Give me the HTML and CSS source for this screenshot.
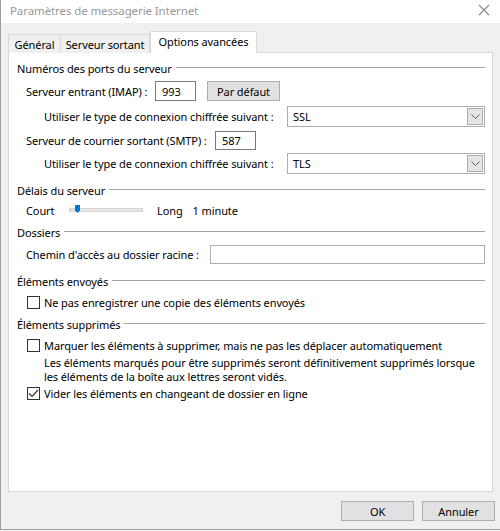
FILE: index.html
```html
<!DOCTYPE html>
<html lang="fr">
<head>
    <meta charset="UTF-8">
    <title>Paramètres de messagerie Internet</title>
    <link rel="stylesheet" href="styles.css">
</head>
<body>
    <div class="window">
        <!-- Title bar -->
        <div class="title-bar">
            <span class="title-text">Paramètres de messagerie Internet</span>
            <svg class="close-icon" width="12" height="12" viewBox="0 0 12 12">
                <path d="M1 1 L11 11 M11 1 L1 11" stroke="#8a8a8a" stroke-width="1.1" fill="none"/>
            </svg>
        </div>

        <!-- Tabs -->
        <div class="tab-strip">
            <div class="tab tab-general">Général</div>
            <div class="tab tab-out">Serveur sortant</div>
            <div class="tab tab-active">Options avancées</div>
        </div>

        <!-- Tab panel -->
        <div class="tab-panel">
            <div class="group-heading"><span>Numéros des ports du serveur</span></div>

            <div class="row row-imap">
                <label class="lbl lbl-imap">Serveur entrant (IMAP) :</label>
                <div class="text-box port-box">993</div>
                <div class="btn btn-default">Par défaut</div>
            </div>
            <div class="row row-ssl">
                <label class="lbl lbl-enc">Utiliser le type de connexion chiffrée suivant :</label>
                <div class="combo"><span class="combo-value">SSL</span><span class="combo-arrow"><svg width="9" height="5" viewBox="0 0 9 5"><path d="M0.5 0.5 L4.5 4.5 L8.5 0.5" stroke="#606060" fill="none"/></svg></span></div>
            </div>
            <div class="row row-smtp">
                <label class="lbl lbl-smtp">Serveur de courrier sortant (SMTP) :</label>
                <div class="text-box port-box">587</div>
            </div>
            <div class="row row-tls">
                <label class="lbl lbl-enc">Utiliser le type de connexion chiffrée suivant :</label>
                <div class="combo"><span class="combo-value">TLS</span><span class="combo-arrow"><svg width="9" height="5" viewBox="0 0 9 5"><path d="M0.5 0.5 L4.5 4.5 L8.5 0.5" stroke="#606060" fill="none"/></svg></span></div>
            </div>

            <div class="group-heading heading-delay"><span>Délais du serveur</span></div>
            <div class="row row-slider">
                <span class="lbl lbl-court">Court</span>
                <div class="slider">
                    <div class="slider-track"></div>
                    <svg class="slider-thumb" width="5" height="8" viewBox="0 0 5 8"><path d="M0 0 H5 V5.5 L2.5 8 L0 5.5 Z" fill="#0078d7"/></svg>
                </div>
                <span class="lbl-long">Long</span>
                <span class="lbl-minute">1 minute</span>
            </div>

            <div class="group-heading heading-folders"><span>Dossiers</span></div>
            <div class="row row-path">
                <label class="lbl lbl-path">Chemin d'accès au dossier racine :</label>
                <div class="text-box path-box"></div>
            </div>

            <div class="group-heading heading-sent"><span>Éléments envoyés</span></div>
            <div class="row check-row row-sent">
                <span class="checkbox"></span>
                <span>Ne pas enregistrer une copie des éléments envoyés</span>
            </div>

            <div class="group-heading heading-deleted"><span>Éléments supprimés</span></div>
            <div class="row check-row row-mark">
                <span class="checkbox"></span>
                <span>Marquer les éléments à supprimer, mais ne pas les déplacer automatiquement</span>
            </div>
            <p class="note">Les éléments marqués pour être supprimés seront définitivement supprimés lorsque<br>les éléments de la boîte aux lettres seront vidés.</p>
            <div class="row check-row row-purge">
                <span class="checkbox checked"><svg width="11" height="11" viewBox="0 0 11 11"><path d="M1 5.5 L4 8.5 L10 2" stroke="#333" stroke-width="1.2" fill="none"/></svg></span>
                <span>Vider les éléments en changeant de dossier en ligne</span>
            </div>
        </div>

        <!-- Dialog buttons -->
        <div class="dialog-buttons">
            <div class="btn btn-dialog">OK</div>
            <div class="btn btn-dialog">Annuler</div>
        </div>
    </div>
</body>
</html>
```

FILE: styles.css
```css
/* Base */
body, html {
    margin: 0;
    padding: 0;
    background-color: #f0f0f0;
    font-family: "Noto Sans", "Open Sans", sans-serif;
    font-size: 11px;
    letter-spacing: -0.1px;
    color: #000000;
}

/* Dialog window */
.window {
    width: 499px;
    height: 529px;
    border-left: 1px solid #a0a0a0;
    border-bottom: 1px solid #a0a0a0;
    background-color: #f0f0f0;
    display: flex;
    flex-direction: column;
}

.title-bar {
    box-sizing: border-box;
    height: 23px;
    background-color: #ffffff;
    display: flex;
    align-items: center;
    justify-content: space-between;
    padding: 0 10px 3px 9px;
    flex-shrink: 0;
}

.title-text {
    color: #999999;
    font-size: 11.5px;
}

/* Tabs */
.tab-strip {
    display: flex;
    align-items: flex-end;
    height: 29px;
    padding-left: 7px;
    flex-shrink: 0;
    position: relative;
    z-index: 1;
}

.tab {
    box-sizing: border-box;
    height: 19px;
    margin-bottom: -1px;
    border: 1px solid #d9d9d9;
    border-bottom: none;
    background-color: #f0f0f0;
    display: flex;
    align-items: center;
    justify-content: center;
    white-space: nowrap;
}

.tab-general {
    width: 53px;
}

.tab-out {
    width: 89px;
    border-left: none;
}

.tab-active {
    width: 107px;
    height: 22px;
    background-color: #ffffff;
    padding-bottom: 3px;
}

/* Panel */
.tab-panel {
    box-sizing: border-box;
    margin-left: 7px;
    width: 485px;
    height: 440px;
    background-color: #ffffff;
    border: 1px solid #d9d9d9;
    padding: 7px 7px 0 8px;
    flex-shrink: 0;
}

.group-heading {
    display: flex;
    align-items: center;
    height: 16px;
    white-space: nowrap;
}

.group-heading::after {
    content: "";
    flex: 1;
    border-top: 1px solid #a5a5a5;
    margin-left: 4px;
    margin-top: -1px;
}

.heading-delay { margin-top: 8px; }
.heading-folders { margin-top: 6px; }
.heading-sent { margin-top: 9px; }
.heading-deleted { margin-top: 6px; }

.row {
    display: flex;
    align-items: center;
    padding-left: 9px;
    white-space: nowrap;
}

.lbl {
    flex-shrink: 0;
}

.row-imap { margin-top: 5px; height: 20px; }
.row-ssl { margin-top: 5px; height: 21px; padding-left: 27px; }
.row-smtp { margin-top: 4px; height: 19px; }
.row-tls { margin-top: 3px; height: 21px; padding-left: 27px; }
.row-slider { margin-top: 4px; height: 16px; }
.row-path { margin-top: 5px; height: 19px; }

.lbl-imap { width: 129px; }
.lbl-smtp { width: 189px; }
.lbl-enc { width: 243px; }
.lbl-path { width: 184px; }
.lbl-court { width: 43px; }

.text-box {
    box-sizing: border-box;
    height: 100%;
    border: 1px solid #7a7a7a;
    background-color: #ffffff;
    display: flex;
    align-items: center;
    padding-left: 6px;
}

.port-box {
    width: 41px;
}

.path-box {
    flex: 1;
    border-color: #adadad;
}

.btn {
    box-sizing: border-box;
    border: 1px solid #adadad;
    background-color: #e1e1e1;
    display: flex;
    align-items: center;
    justify-content: center;
}

.btn-default {
    width: 73px;
    height: 20px;
    margin-left: 11px;
}

/* Combo box */
.combo {
    box-sizing: border-box;
    flex: 1;
    height: 100%;
    border: 1px solid #adadad;
    outline: 1px solid #ffffff;
    outline-offset: -2px;
    display: flex;
    align-items: center;
    justify-content: space-between;
    padding: 0 1px 0 5px;
}

.combo-arrow {
    box-sizing: border-box;
    width: 16px;
    height: 17px;
    border: 1px solid #adadad;
    background-color: #e5e5e5;
    display: flex;
    align-items: center;
    justify-content: center;
}

/* Slider */
.slider {
    position: relative;
    width: 74px;
    height: 16px;
    display: flex;
    align-items: center;
}

.slider-track {
    box-sizing: border-box;
    width: 100%;
    height: 4px;
    background-color: #e7e7e7;
    border: 1px solid #d6d6d6;
}

.slider-thumb {
    position: absolute;
    left: 6px;
    top: 3px;
}

.lbl-long {
    margin-left: 14px;
}

.lbl-minute {
    margin-left: 10px;
}

/* Checkboxes */
.check-row {
    height: 16px;
    padding-left: 10px;
}

.checkbox {
    box-sizing: border-box;
    width: 13px;
    height: 13px;
    border: 1px solid #333333;
    background-color: #ffffff;
    margin-right: 4px;
    display: flex;
    align-items: center;
    justify-content: center;
    flex-shrink: 0;
}

.row-sent { margin-top: 5px; }
.row-mark { margin-top: 5px; }
.row-purge { margin-top: 1px; }

.note {
    margin: 3px 0 0 27px;
    line-height: 14px;
    white-space: nowrap;
}

/* Bottom buttons */
.dialog-buttons {
    display: flex;
    justify-content: flex-end;
    gap: 8px;
    padding: 9px 5px 0 0;
}

.btn-dialog {
    width: 73px;
    height: 20px;
}
```
